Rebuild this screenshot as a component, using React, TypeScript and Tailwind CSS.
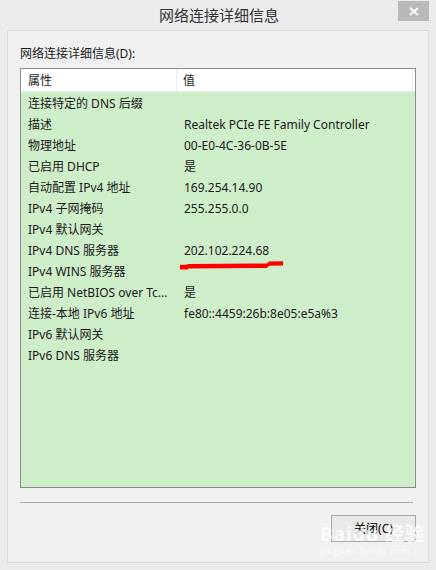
import React from "react";

const rows: [string, string][] = [
  ["连接特定的 DNS 后缀", ""],
  ["描述", "Realtek PCIe FE Family Controller"],
  ["物理地址", "00-E0-4C-36-0B-5E"],
  ["已启用 DHCP", "是"],
  ["自动配置 IPv4 地址", "169.254.14.90"],
  ["IPv4 子网掩码", "255.255.0.0"],
  ["IPv4 默认网关", ""],
  ["IPv4 DNS 服务器", "202.102.224.68"],
  ["IPv4 WINS 服务器", ""],
  ["已启用 NetBIOS over Tc...", "是"],
  ["连接-本地 IPv6 地址", "fe80::4459:26b:8e05:e5a%3"],
  ["IPv6 默认网关", ""],
  ["IPv6 DNS 服务器", ""],
];

const font = {
  fontFamily: '"Noto Sans", "Noto Sans CJK SC", sans-serif',
};

const App = () => {
  return (
    <div
      className="w-[436px] h-[570px] bg-[#ebebeb] flex flex-col text-[#1a1a1a] overflow-hidden"
      style={font}
    >
      {/* title bar */}
      <div className="h-[30px] flex items-start relative">
        <div className="flex-1 text-center text-[15px] leading-[30px] text-[#333] pl-[2px]">
          网络连接详细信息
        </div>
        <button className="absolute right-[7px] top-[1px] w-[31px] h-[20px] bg-[#b9b9b9] flex items-center justify-center">
          <svg width="10" height="9" viewBox="0 0 10 9">
            <path d="M1 1L9 8M9 1L1 8" stroke="white" strokeWidth="2" />
          </svg>
        </button>
      </div>

      {/* client area */}
      <div className="mx-[7px] mb-[7px] flex-1 bg-[#f0f0f0] border border-[#dadada] flex flex-col px-[12px] relative">
        <div className="text-[12px] leading-[16px] mt-[15px] mb-[6px]">网络连接详细信息(D):</div>

        <div className="w-[396px] h-[420px] border border-[#8c8c8c] bg-[#ceedc9] flex flex-col text-[12px] relative">
          <div className="h-[23px] bg-white flex border-b border-[#e6ecf5] shrink-0">
            <div className="w-[156px] pl-[7px] leading-[23px] border-r border-[#e8edf5]">属性</div>
            <div className="flex-1 pl-[6px] leading-[23px] mr-[2px] border-r border-[#e8edf5]">值</div>
          </div>
          <div className="flex flex-col pt-[1px]">
            {rows.map(([k, v]) => (
              <div key={k} className="h-[21px] flex items-center leading-[21px]">
                <div className="w-[156px] pl-[7px] whitespace-nowrap">{k}</div>
                <div className="pl-[7px] whitespace-nowrap">{v}</div>
              </div>
            ))}
          </div>

          {/* red annotation */}
          <svg
            className="absolute left-[159px] top-[192px]"
            width="106"
            height="10"
            viewBox="0 0 106 10"
          >
            <path
              d="M0 4 L8 3.5 L8 3 L87 2.5 L89 0.5 L103 0.3 L103 4.5 L89 4.8 L87 7 L8 7.5 L8 8.5 L0 8.5 Z"
              fill="#ff0000"
            />
          </svg>
        </div>

        <div className="mt-[14px] w-[393px] h-[1px] bg-[#a9a9a9]" />

        <div className="flex justify-end mt-[12px]">
          <button className="w-[85px] h-[27px] border border-[#a8a8a8] bg-[#e9e9e9] text-[12px] leading-[25px] text-black">
            关闭(C)
          </button>
        </div>

        {/* watermark */}
        <div className="absolute left-[312px] top-[493px] pointer-events-none text-white opacity-75 flex flex-col items-start">
          <span className="text-[19px] leading-[20px] font-bold tracking-[1px]">Baidu 经验</span>
          <span
            className="text-[11px] leading-[13px] tracking-[0.5px]"
            style={{ fontFamily: '"Liberation Serif", serif' }}
          >
            jingyan.baidu.com
          </span>
        </div>
      </div>
    </div>
  );
};

export default App;
